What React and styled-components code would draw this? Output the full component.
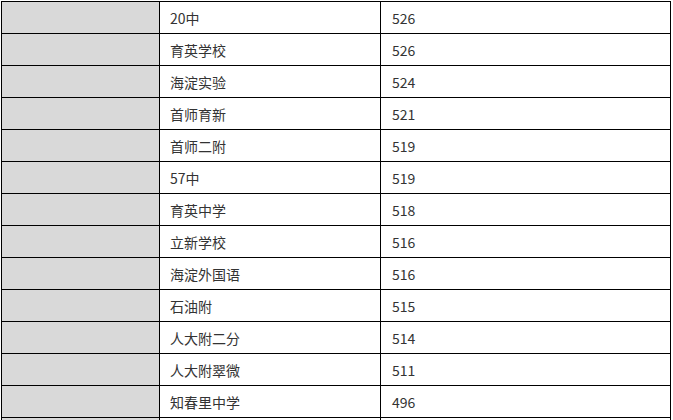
import React from "react";
import styled, { createGlobalStyle } from "styled-components";

const GlobalStyle = createGlobalStyle`
  html, body {
    margin: 0;
    padding: 0;
    background: #fff;
    overflow: hidden;
  }
  body {
    font-family: "Noto Sans CJK SC", "Noto Sans", sans-serif;
  }
`;

const Table = styled.div`
  display: grid;
  grid-template-columns: 158px 221px 290px;
  margin: 1px 0 0 1px;
  width: max-content;
  border-left: 1px solid #000;
  border-top: 1px solid #000;
`;

const Cell = styled.div`
  box-sizing: border-box;
  height: 32px;
  display: flex;
  align-items: center;
  padding-left: ${(p) => (p.$num ? "11px" : "10px")};
  border-right: 1px solid #000;
  border-bottom: 1px solid #000;
  background: ${(p) => (p.$shade ? "#d9d9d9" : "#fff")};
  color: #333;
  font-size: 14px;
  white-space: nowrap;
`;

const rows = [
  ["20中", "526"],
  ["育英学校", "526"],
  ["海淀实验", "524"],
  ["首师育新", "521"],
  ["首师二附", "519"],
  ["57中", "519"],
  ["育英中学", "518"],
  ["立新学校", "516"],
  ["海淀外国语", "516"],
  ["石油附", "515"],
  ["人大附二分", "514"],
  ["人大附翠微", "511"],
  ["知春里中学", "496"],
  ["", ""],
];

export default function App() {
  return (
    <>
      <GlobalStyle />
      <Table>
        {rows.map(([school, score], i) => (
          <React.Fragment key={i}>
            <Cell $shade />
            <Cell>{school}</Cell>
            <Cell $num>{score}</Cell>
          </React.Fragment>
        ))}
      </Table>
    </>
  );
}
